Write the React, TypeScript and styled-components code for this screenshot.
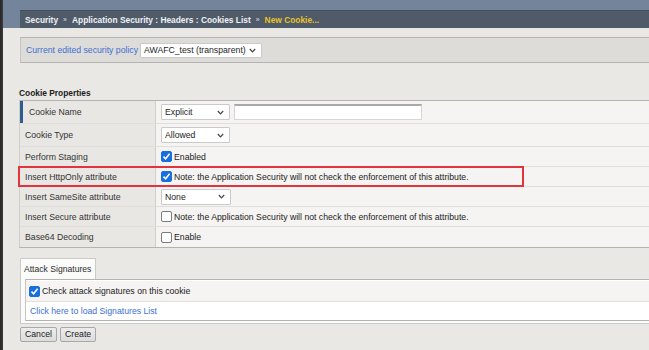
import React from "react";
import styled, { createGlobalStyle } from "styled-components";

const Global = createGlobalStyle`
  html, body { margin: 0; padding: 0; }
  body {
    background: #e9e8e4;
    font-family: "Liberation Sans", Arial, Helvetica, sans-serif;
    overflow: hidden;
  }
`;

const Page = styled.div`
  display: flex;
  width: 649px;
  height: 350px;
  overflow: hidden;
`;

const LeftEdge = styled.div`
  width: 3px;
  flex: none;
  background: linear-gradient(to right, #262626, #3c3c3c);
`;

const Main = styled.div`
  flex: 1;
  display: flex;
  flex-direction: column;
  min-width: 0;
`;

const Header = styled.div`
  background: #74849a;
  padding: 10px 0 0 17px;
`;

const Breadcrumb = styled.div`
  height: 18px;
  box-sizing: border-box;
  background: #4f5b69;
  border-top: 1px solid #46505d;
  display: flex;
  align-items: center;
  padding-left: 5px;
  font-size: 8.4px;
  font-weight: bold;
  color: #f4f6f8;
  white-space: nowrap;
`;

const Crumb = styled.span<{ $current?: boolean }>`
  color: ${(p) => (p.$current ? "#e8c12c" : "#eef1f4")};
`;

const Sep = styled.span`
  color: #b9c0c9;
  font-size: 7px;
  margin: 0 5px;
`;

const Content = styled.div`
  padding: 9px 0 0 16px;
  display: flex;
  flex-direction: column;
`;

const PolicyBar = styled.div`
  margin-left: 1px;
  height: 26px;
  box-sizing: border-box;
  background: #dedcd8;
  border-top: 1px solid #b4b4b2;
  border-bottom: 1px solid #b4b4b2;
  border-left: 1px solid #c4c4c2;
  display: flex;
  align-items: center;
  padding-left: 5px;
  gap: 2px;
  font-size: 8.7px;
`;

const LinkText = styled.span`
  color: #3d6fd4;
  white-space: nowrap;
`;

const SelectBox = styled.div<{ $w: number; $h?: number }>`
  width: ${(p) => p.$w}px;
  height: ${(p) => p.$h ?? 16}px;
  box-sizing: border-box;
  background: #fff;
  border: 1px solid #cacaca;
  border-radius: 1px;
  display: flex;
  align-items: center;
  justify-content: space-between;
  padding: 0 5px 0 3px;
  font-size: 8.7px;
  color: #1e1e1e;
  white-space: nowrap;
  flex: none;
`;

const Chevron = () => (
  <svg width="7" height="5" viewBox="0 0 7 5">
    <polyline points="0.8,1 3.5,3.8 6.2,1" fill="none" stroke="#444" strokeWidth="1.2" />
  </svg>
);

const Select = ({ value, width, height }: { value: string; width: number; height?: number }) => (
  <SelectBox $w={width} $h={height}>
    <span>{value}</span>
    <Chevron />
  </SelectBox>
);

const SectionTitle = styled.div`
  margin-top: 25px;
  margin-bottom: 2px;
  font-size: 8.4px;
  font-weight: bold;
  line-height: 10px;
  color: #1c1c1c;
`;

const Table = styled.div`
  display: flex;
  flex-direction: column;
  border-top: 1px solid #b3b3b1;
  border-bottom: 1px solid #b3b3b1;
  border-left: 1px solid #cfcecb;
`;

const Row = styled.div<{ $h: number }>`
  position: relative;
  display: grid;
  grid-template-columns: 136px 1fr;
  height: ${(p) => p.$h}px;
  box-sizing: border-box;
  border-bottom: 1px solid #dfdedb;
  &:last-child { border-bottom: none; }
`;

const Label = styled.div<{ $accent?: boolean }>`
  display: flex;
  align-items: center;
  background: #e8e7e3;
  border-right: 1px solid #cfcecb;
  padding-left: ${(p) => (p.$accent ? 9 : 5)}px;
  box-shadow: ${(p) => (p.$accent ? "inset 3px 0 0 #2f5e8e" : "none")};
  font-size: 8.7px;
  color: #333;
  white-space: nowrap;
`;

const Value = styled.div`
  display: flex;
  align-items: center;
  gap: 4px;
  background: #f5f4f2;
  padding-left: 5px;
  font-size: 8.7px;
  color: #222;
  white-space: nowrap;
`;

const TextInput = styled.div`
  width: 188px;
  height: 16px;
  box-sizing: border-box;
  background: #fff;
  border: 1px solid #d6d6d6;
  border-top: 2px solid #a9a9a9;
`;

const CheckLabel = styled.span`
  display: inline-flex;
  align-items: center;
  gap: 2px;
`;

const Box = styled.span<{ $checked?: boolean }>`
  width: 11px;
  height: 11px;
  box-sizing: border-box;
  border-radius: 2px;
  flex: none;
  display: inline-flex;
  align-items: center;
  justify-content: center;
  background: ${(p) => (p.$checked ? "#176fe0" : "#fff")};
  border: 1px solid ${(p) => (p.$checked ? "#176fe0" : "#7a7a7a")};
`;

const Checkbox = ({ checked, children }: { checked?: boolean; children: React.ReactNode }) => (
  <CheckLabel>
    <Box $checked={checked}>
      {checked && (
        <svg width="9" height="9" viewBox="0 0 9 9">
          <polyline points="1.5,4.6 3.6,6.7 7.6,1.8" fill="none" stroke="#fff" strokeWidth="1.6" />
        </svg>
      )}
    </Box>
    <span>{children}</span>
  </CheckLabel>
);

const Highlight = styled.div`
  position: absolute;
  top: -1px;
  bottom: -1px;
  left: -2px;
  width: 506px;
  border: 2px solid #e2343d;
  box-sizing: border-box;
  pointer-events: none;
`;

const TabArea = styled.div`
  margin-top: 10px;
  margin-left: 1px;
  display: flex;
  flex-direction: column;
`;

const Tab = styled.div`
  align-self: flex-start;
  width: 76px;
  height: 21px;
  box-sizing: border-box;
  background: #fbfbfa;
  border: 1px solid #cbcbc9;
  border-bottom: none;
  display: flex;
  align-items: center;
  padding-left: 3px;
  font-size: 8.6px;
  color: #2a2a2a;
  white-space: nowrap;
`;

const TabPanel = styled.div`
  background: #fbfbfa;
  border-left: 1px solid #cbcbc9;
  border-bottom: 1px solid #cbcbc9;
  padding: 0 0 2px 4px;
`;

const InnerBox = styled.div`
  display: flex;
  flex-direction: column;
  border-top: 1px solid #b3b3b1;
  border-bottom: 1px solid #b3b3b1;
  border-left: 1px solid #c4c4c2;
`;

const SigRow = styled.div<{ $alt?: boolean }>`
  height: ${(p) => (p.$alt ? 22 : 18)}px;
  box-sizing: border-box;
  display: flex;
  align-items: center;
  padding-left: ${(p) => (p.$alt ? 3 : 4)}px;
  background: ${(p) => (p.$alt ? "#f5f4f2" : "#ffffff")};
  border-top: ${(p) => (p.$alt ? "1px solid #ffffff" : "none")};
  border-bottom: ${(p) => (p.$alt ? "1px solid #e2e1de" : "none")};
  font-size: 8.7px;
  color: #222;
  white-space: nowrap;
`;

const Buttons = styled.div`
  display: flex;
  gap: 3px;
  margin-top: 3px;
  margin-left: 1px;
`;

const Button = styled.button`
  height: 15px;
  box-sizing: border-box;
  padding: 0 4px;
  font-family: inherit;
  font-size: 8.7px;
  color: #222;
  background: linear-gradient(#ececec, #dcdcdc);
  border: 1px solid #a8a8a8;
  border-radius: 2px;
  line-height: 1;
`;

export default function App() {
  return (
    <>
      <Global />
      <Page>
        <LeftEdge />
        <Main>
          <Header>
            <Breadcrumb>
              <Crumb>Security</Crumb>
              <Sep>»</Sep>
              <Crumb>Application Security : Headers : Cookies List</Crumb>
              <Sep>»</Sep>
              <Crumb $current>New Cookie...</Crumb>
            </Breadcrumb>
          </Header>
          <Content>
            <PolicyBar>
              <LinkText>Current edited security policy</LinkText>
              <Select value="AWAFC_test (transparent)" width={122} height={15} />
            </PolicyBar>

            <SectionTitle>Cookie Properties</SectionTitle>
            <Table>
              <Row $h={23}>
                <Label $accent>Cookie Name</Label>
                <Value>
                  <Select value="Explicit" width={69} />
                  <TextInput />
                </Value>
              </Row>
              <Row $h={23}>
                <Label>Cookie Type</Label>
                <Value>
                  <Select value="Allowed" width={69} />
                </Value>
              </Row>
              <Row $h={20}>
                <Label>Perform Staging</Label>
                <Value>
                  <Checkbox checked>Enabled</Checkbox>
                </Value>
              </Row>
              <Row $h={20}>
                <Label>Insert HttpOnly attribute</Label>
                <Value>
                  <Checkbox checked>
                    Note: the Application Security will not check the enforcement of this attribute.
                  </Checkbox>
                </Value>
                <Highlight />
              </Row>
              <Row $h={20}>
                <Label>Insert SameSite attribute</Label>
                <Value>
                  <Select value="None" width={70} />
                </Value>
              </Row>
              <Row $h={20}>
                <Label>Insert Secure attribute</Label>
                <Value>
                  <Checkbox>
                    Note: the Application Security will not check the enforcement of this attribute.
                  </Checkbox>
                </Value>
              </Row>
              <Row $h={20}>
                <Label>Base64 Decoding</Label>
                <Value>
                  <Checkbox>Enable</Checkbox>
                </Value>
              </Row>
            </Table>

            <TabArea>
              <Tab>Attack Signatures</Tab>
              <TabPanel>
                <InnerBox>
                  <SigRow $alt>
                    <Checkbox checked>Check attack signatures on this cookie</Checkbox>
                  </SigRow>
                  <SigRow>
                    <LinkText>Click here to load Signatures List</LinkText>
                  </SigRow>
                </InnerBox>
              </TabPanel>
            </TabArea>

            <Buttons>
              <Button>Cancel</Button>
              <Button>Create</Button>
            </Buttons>
          </Content>
        </Main>
      </Page>
    </>
  );
}
